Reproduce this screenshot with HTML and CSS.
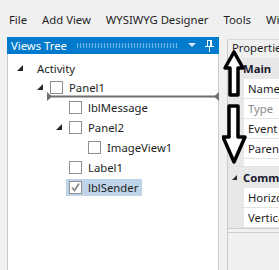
FILE: index.html
```html
<!DOCTYPE html>
<html lang="en">
<head>
  <meta charset="UTF-8" />
  <title>Designer</title>
  <link rel="stylesheet" href="styles.css">
</head>
<body>
  <div class="menubar">
    <span class="menu-item">File</span>
    <span class="menu-item">Add View</span>
    <span class="menu-item">WYSIWYG Designer</span>
    <span class="menu-item">Tools</span>
    <span class="menu-item">Windows</span>
  </div>

  <div class="workspace">
    <div class="tree-panel">
      <div class="panel-title">
        <span class="title-text">Views Tree</span>
        <span class="grip"></span>
        <svg class="title-icon" width="8" height="5" viewBox="0 0 8 5"><polygon points="0,0 8,0 4,4" fill="#d6e9f8"/></svg>
        <svg class="title-icon pin" width="9" height="12" viewBox="0 0 9 12">
          <rect x="2.5" y="0.5" width="4" height="6" fill="none" stroke="#fff"/>
          <rect x="5" y="1" width="1" height="5" fill="#fff"/>
          <rect x="0" y="6" width="9" height="1" fill="#fff"/>
          <rect x="4" y="7" width="1" height="5" fill="#fff"/>
        </svg>
      </div>
      <div class="tree-body">
        <div class="tree-row root">
          <span class="expander"></span>
          <span class="label">Activity</span>
        </div>
        <div class="tree-row level1">
          <span class="expander"></span>
          <span class="checkbox"></span>
          <span class="label">Panel1</span>
        </div>
        <div class="tree-row level2">
          <span class="checkbox"></span>
          <span class="label">lblMessage</span>
        </div>
        <div class="tree-row level2">
          <span class="expander"></span>
          <span class="checkbox"></span>
          <span class="label">Panel2</span>
        </div>
        <div class="tree-row level3">
          <span class="checkbox"></span>
          <span class="label">ImageView1</span>
        </div>
        <div class="tree-row level2">
          <span class="checkbox"></span>
          <span class="label">Label1</span>
        </div>
        <div class="tree-row level2">
          <span class="selected">
            <span class="checkbox checked">
              <svg width="11" height="11" viewBox="0 0 11 11"><polyline points="2,5.5 4.5,8.5 9,1.5" fill="none" stroke="#8a8a8a" stroke-width="1.8"/></svg>
            </span>
            <span class="label">lblSender</span>
          </span>
        </div>

        <div class="drop-marker">
          <svg width="172" height="9" viewBox="0 0 172 9">
            <polygon points="0,0 5,4.5 0,9" fill="#6f6f6f"/>
            <rect x="0" y="3.5" width="172" height="2" fill="#6f6f6f"/>
            <polygon points="172,0 167,4.5 172,9" fill="#6f6f6f"/>
          </svg>
        </div>
      </div>
    </div>

    <div class="props-panel">
      <div class="props-title">Properties</div>
      <div class="grid">
        <div class="category"><span class="cat-arrow"></span>Main</div>
        <div class="prop-row"><span class="prop-name">Name</span></div>
        <div class="prop-row"><span class="prop-name muted">Type</span></div>
        <div class="prop-row"><span class="prop-name">Event</span></div>
        <div class="prop-row"><span class="prop-name">Parent</span></div>
        <div class="prop-row short"></div>
        <div class="category"><span class="cat-arrow"></span>Common</div>
        <div class="prop-row"><span class="prop-name">Horizontal</span></div>
        <div class="prop-row"><span class="prop-name">Vertical</span></div>
        <div class="grid-end"></div>
      </div>
    </div>
  </div>

  <svg class="arrows" width="30" height="120" viewBox="0 0 30 120">
    <polygon points="12,3 21,19 16,19 16,46 8,46 8,19 3,19" fill="#fff" stroke="#000" stroke-width="3.5" stroke-linejoin="round"/>
    <polygon points="7,57 16,57 16,88 23,88 12,113 1,88 7,88" fill="#fff" stroke="#000" stroke-width="3.5" stroke-linejoin="round"/>
  </svg>
</body>
</html>
```

FILE: styles.css
```css
body {
  margin: 0;
  background-color: #f0f0f0;
  font-family: 'Noto Sans', sans-serif;
  font-size: 11.3px;
  color: #1e1e1e;
  overflow: hidden;
  width: 279px;
  height: 270px;
  position: relative;
}
.menubar {
  display: flex;
  gap: 15px;
  padding: 11px 0 0 9px;
  height: 26px;
  white-space: nowrap;
  line-height: 17px;
}
.workspace {
  display: flex;
  padding-left: 7px;
  height: 233px;
}
.tree-panel {
  width: 212px;
  display: flex;
  flex-direction: column;
  flex-shrink: 0;
}
.panel-title {
  height: 17px;
  background-color: #007acc;
  color: #fff;
  display: flex;
  align-items: center;
  padding-left: 4px;
  padding-right: 5px;
}
.title-text {
  white-space: nowrap;
}
.grip {
  flex: 1;
  height: 5px;
  margin: 0 6px 0 9px;
  background-image: radial-gradient(circle, #6db4e6 45%, transparent 55%);
  background-size: 3px 2.5px;
}
.title-icon {
  margin-left: 4px;
}
.pin {
  margin-left: 9px;
}
.tree-body {
  flex: 1;
  background-color: #fff;
  border-left: 1px solid #cccccc;
  border-right: 1px solid #cccccc;
  position: relative;
  padding-top: 5px;
}
.tree-row {
  height: 20px;
  display: flex;
  align-items: center;
  white-space: nowrap;
}
.tree-row.root {
  height: 18px;
  padding-left: 9px;
}
.tree-row.level1 { padding-left: 29px; }
.tree-row.level2 { padding-left: 61px; }
.tree-row.level3 { padding-left: 80px; }
.tree-row.level2 .expander { margin-left: -13px; }
.expander {
  width: 0;
  height: 0;
  border-left: 6px solid transparent;
  border-bottom: 6px solid #262626;
  margin-right: 7px;
}
.root .expander {
  margin-right: 14px;
}
.checkbox {
  width: 11px;
  height: 11px;
  border: 1px solid #8f8f8f;
  background-color: #fff;
  margin-right: 6px;
  display: flex;
  align-items: center;
  justify-content: center;
}
.selected {
  display: flex;
  align-items: center;
  height: 17px;
  margin-left: -3px;
  padding: 0 4px 0 3px;
  background-color: #bfd4e8;
}
.drop-marker {
  position: absolute;
  left: 39px;
  top: 38px;
  height: 9px;
  line-height: 0;
}
.props-panel {
  margin-left: 8px;
  flex: 1;
  border-left: 1px solid #cccccc;
  border-top: 1px solid #dadada;
  margin-top: 2px;
  display: flex;
  flex-direction: column;
  min-width: 60px;
}
.props-title {
  height: 18px;
  line-height: 16px;
  padding-left: 4px;
  white-space: nowrap;
}
.grid {
  white-space: nowrap;
}
.category {
  height: 21px;
  display: flex;
  align-items: center;
  background-color: #e8e8e8;
  font-weight: bold;
  color: #1a1a2e;
}
.cat-arrow {
  width: 0;
  height: 0;
  border-left: 5px solid transparent;
  border-bottom: 5px solid #2b2b2b;
  margin: 0 6px 0 4px;
}
.prop-row {
  height: 19px;
  border-left: 16px solid #e8e8e8;
  border-bottom: 1px solid #e3e3e3;
  background-color: #fff;
  display: flex;
  align-items: center;
  padding-left: 4px;
}
.prop-row.short {
  height: 7px;
}
.muted {
  color: #8a8a8a;
}
.grid-end {
  height: 3px;
  border-top: 1px solid #cfcfcf;
  border-bottom: 1px solid #cfcfcf;
}
.arrows {
  position: absolute;
  left: 222px;
  top: 49px;
}
```
